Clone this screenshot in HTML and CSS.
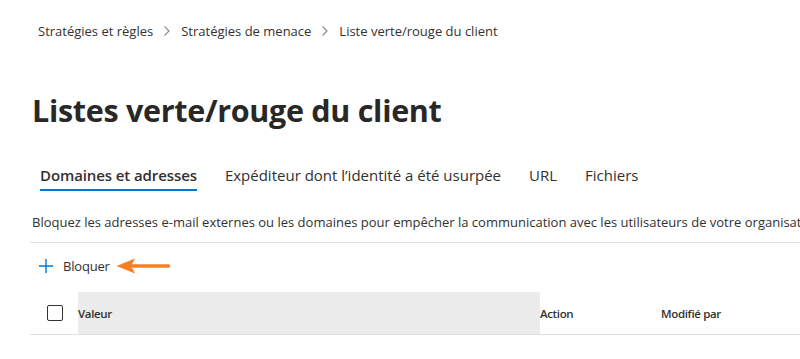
FILE: index.html
```html
<!DOCTYPE html>
<html lang="fr">
<head>
<meta charset="utf-8">
<title>Listes verte/rouge du client</title>
<link rel="stylesheet" href="styles.css">
</head>
<body>
<div class="page">
  <nav class="crumbs">
    <span class="crumb">Stratégies et règles</span>
    <svg class="chev" width="8" height="12" viewBox="0 0 8 12"><path d="M1.5 1.5 L6 6 L1.5 10.5" fill="none" stroke="#8a8886" stroke-width="1.1"/></svg>
    <span class="crumb">Stratégies de menace</span>
    <svg class="chev" width="8" height="12" viewBox="0 0 8 12"><path d="M1.5 1.5 L6 6 L1.5 10.5" fill="none" stroke="#8a8886" stroke-width="1.1"/></svg>
    <span class="crumb">Liste verte/rouge du client</span>
  </nav>

  <h1 class="title">Listes verte/rouge du client</h1>

  <div class="tabs">
    <div class="tab active">Domaines et adresses</div>
    <div class="tab">Expéditeur dont l’identité a été usurpée</div>
    <div class="tab">URL</div>
    <div class="tab">Fichiers</div>
  </div>

  <div class="desc-wrap">
    <p class="desc">Bloquez les adresses e-mail externes ou les domaines pour empêcher la communication avec les utilisateurs de votre organisation.</p>
  </div>

  <div class="toolbar">
    <div class="cmd">
      <svg class="plus" width="16" height="16" viewBox="0 0 16 16"><path d="M8 1 V15 M1 8 H15" stroke="#0078d4" stroke-width="1.4" fill="none"/></svg>
      <span>Bloquer</span>
    </div>
    <svg class="arrow" width="56" height="18" viewBox="0 0 56 18"><path d="M14 9 H52.5" stroke="#f58025" stroke-width="3.6" stroke-linecap="round"/><path d="M0.5 9 L19 1.5 L15 9 L19 16.5 Z" fill="#f58025"/></svg>
  </div>

  <div class="thead">
    <div class="cell check"><span class="box"></span></div>
    <div class="cell valeur">Valeur</div>
    <div class="cell action">Action</div>
    <div class="cell modif">Modifié par</div>
  </div>
</div>
</body>
</html>
```

FILE: styles.css
```css
html, body {
  margin: 0;
  padding: 0;
  background: #ffffff;
  overflow: hidden;
}
body {
  font-family: "Open Sans", "Noto Sans", "DejaVu Sans", sans-serif;
  color: #323130;
}
.page {
  padding-left: 30px;
  width: 770px;
}
.crumbs {
  display: flex;
  align-items: center;
  gap: 8px;
  height: 20px;
  margin-top: 21px;
  padding-left: 8px;
  font-size: 13px;
}
.crumb { white-space: nowrap; }
.chev { margin: 0 2px; }
.title {
  margin: 49px 0 0 2px;
  font-size: 30.5px;
  font-weight: 700;
  line-height: 40px;
  letter-spacing: -0.3px;
  color: #292827;
}
.tabs {
  display: flex;
  margin-top: 27px;
  margin-left: 2px;
  gap: 12px;
}
.tab {
  font-size: 15px;
  padding: 8px 8px 0 8px;
  height: 31px;
  box-sizing: border-box;
  white-space: nowrap;
  position: relative;
}
.tab.active {
  font-weight: 600;
  letter-spacing: -0.1px;
}
.tab.active::after {
  content: "";
  position: absolute;
  left: 8px;
  right: 8px;
  bottom: -3px;
  height: 2px;
  background: #0078d4;
}
.desc-wrap {
  margin: 24px 0 0 2px;
  overflow: hidden;
}
.desc {
  margin: 0;
  font-size: 13px;
  white-space: nowrap;
  line-height: 20px;
}
.toolbar {
  margin-top: 10px;
  border-top: 1px solid #e1dfdd;
  display: flex;
  align-items: center;
  height: 45px;
  padding-left: 8px;
}
.cmd {
  display: flex;
  align-items: center;
  gap: 9px;
  font-size: 13px;
  letter-spacing: -0.2px;
}
.arrow { margin-left: 6px; }
.thead {
  margin-top: 4px;
  display: flex;
  height: 42px;
  border-bottom: 1px solid #e1dfdd;
  font-size: 11.5px;
  font-weight: 600;
  letter-spacing: -0.35px;
}
.cell {
  display: flex;
  align-items: center;
}
.check {
  width: 48px;
  justify-content: center;
}
.box {
  width: 14px;
  height: 14px;
  border: 1px solid #323130;
  border-radius: 2px;
  margin-left: 2px;
}
.valeur {
  width: 462px;
  background: #ececec;
}
.action { width: 121px; }
.modif { flex: 1; }
```
